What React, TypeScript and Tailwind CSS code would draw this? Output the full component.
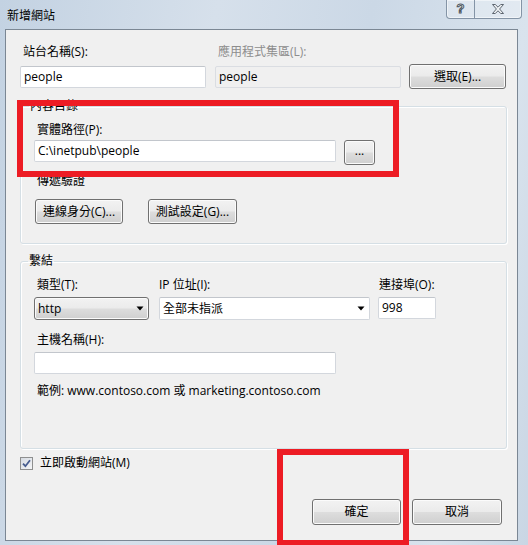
import type { ReactNode } from "react";

const btnFace =
  "rounded-[3px] border border-[#707070] bg-[linear-gradient(to_bottom,#f2f2f2_0%,#ebebeb_48%,#dddddd_52%,#cfcfcf_100%)] shadow-[inset_0_0_0_1px_#fbfbfb]";

function Button({ children, className }: { children: ReactNode; className: string }) {
  return (
    <div className={`flex items-center justify-center leading-[16px] ${btnFace} ${className}`}>
      {children}
    </div>
  );
}

function TextBox({
  value,
  className,
  disabled,
}: {
  value?: string;
  className: string;
  disabled?: boolean;
}) {
  return (
    <div
      className={`flex items-center rounded-[2px] border pl-[3px] leading-[16px] ${
        disabled
          ? "border-[#dadde2] bg-[#f0f0f0]"
          : "border-[#d3d7dd] border-t-[#c2c6cc] bg-white"
      } ${className}`}
    >
      {value}
    </div>
  );
}

function Arrow() {
  return (
    <svg width="8" height="5" viewBox="0 0 8 5" className="shrink-0">
      <path d="M0.5 0.5 H7.5 L4 4.5 Z" fill="#000" />
    </svg>
  );
}

export default function App() {
  return (
    <div className="relative h-[545px] w-[528px] overflow-hidden bg-[linear-gradient(100deg,#c3d2e2_0%,#d6e0eb_35%,#cbd8e6_60%,#d9e3ed_85%,#c9d6e4_100%)] font-['Open_Sans','Noto_Sans_CJK_TC',sans-serif] text-[12px] text-black">
      {/* Title bar */}
      <div className="flex h-[29px] items-start justify-between">
        <div className="pl-[7px] pt-[7px] leading-[16px] font-['Noto_Sans_CJK_TC',sans-serif]">
          新增網站
        </div>
        <div className="mr-[6px] flex h-[19px] rounded-b-[4px] border border-t-0 border-[#8494a6] bg-white/25 shadow-[inset_0_0_0_1px_rgba(255,255,255,0.5)]">
          <div className="flex w-[28px] items-center justify-center border-r border-[#8494a6] pb-[1px] text-[13px] font-bold leading-none text-[#f3f5f7] [-webkit-text-stroke:1px_#4f5862] font-['Liberation_Sans',sans-serif]">
            ?
          </div>
          <div className="flex w-[46px] items-center justify-center">
            <svg width="12" height="10" viewBox="0 0 12 10">
              <polygon
                points="0.5,0.5 3.3,0.5 6,3.2 8.7,0.5 11.5,0.5 7.6,5 11.5,9.5 8.7,9.5 6,6.8 3.3,9.5 0.5,9.5 4.4,5"
                fill="#eef1f4"
                stroke="#4f5862"
                strokeWidth="0.9"
                strokeLinejoin="round"
              />
            </svg>
          </div>
        </div>
      </div>

      {/* Client area */}
      <div className="ml-[5px] h-[512px] w-[513px] border border-[#7b8794] bg-[#f0f0f0]">
        <div className="pl-[14px] pt-[14px]">
          {/* Site name / application pool */}
          <div className="flex leading-[16px]">
            <div className="w-[186px] pl-[3px]">站台名稱(S):</div>
            <div className="ml-[9px] w-[186px] pl-[3px] text-[#8d8d8d]">應用程式集區(L):</div>
          </div>
          <div className="mt-[4px] flex h-[25px] items-center">
            <TextBox value="people" className="h-[22px] w-[186px]" />
            <TextBox value="people" disabled className="ml-[9px] h-[22px] w-[186px]" />
            <Button className="ml-[8px] h-[25px] w-[97px]">選取(E)...</Button>
          </div>

          {/* Content directory */}
          <fieldset className="mt-[9px] w-[487px] rounded-[3px] border border-[#d5dfe5] shadow-[inset_1px_1px_0_#fff,1px_1px_0_#fff]">
            <legend className="ml-[8px] px-[1px] leading-[16px]">內容目錄</legend>
            <div className="pb-[19px] pl-[13px]">
              <div className="mt-[8px] pl-[3px] leading-[16px]">實體路徑(P):</div>
              <div className="mt-[2px] flex items-start">
                <TextBox value="C:\inetpub\people" className="h-[22px] w-[302px]" />
                <div
                  className={`ml-[8px] flex h-[25px] w-[31px] items-center justify-center pb-[3px] leading-[16px] ${btnFace} border-[#3c7fb1]`}
                >
                  ...
                </div>
              </div>
              <div className="mt-[8px] pl-[3px] leading-[16px]">傳遞驗證</div>
              <div className="mt-[10px] flex">
                <Button className="ml-[1px] h-[25px] w-[88px]">連線身分(C)...</Button>
                <Button className="ml-[25px] h-[25px] w-[89px]">測試設定(G)...</Button>
              </div>
            </div>
          </fieldset>

          {/* Bindings */}
          <fieldset className="mt-[9px] w-[487px] rounded-[3px] border border-[#d5dfe5] shadow-[inset_1px_1px_0_#fff,1px_1px_0_#fff]">
            <legend className="ml-[7px] px-[1px] leading-[16px]">繫結</legend>
            <div className="pb-[49px] pl-[13px]">
              <div className="mt-[8px] flex leading-[16px]">
                <div className="w-[115px] pl-[3px]">類型(T):</div>
                <div className="ml-[10px] w-[211px]">IP 位址(I):</div>
                <div className="ml-[8px] w-[58px] pl-[1px]">連接埠(O):</div>
              </div>
              <div className="mt-[4px] flex items-start">
                <div
                  className={`flex h-[23px] w-[115px] items-center justify-between pl-[3px] pr-[4px] leading-[16px] ${btnFace}`}
                >
                  <span>http</span>
                  <Arrow />
                </div>
                <div className="ml-[10px] flex h-[23px] w-[211px] items-center justify-between rounded-[2px] border border-[#d3d7dd] border-t-[#c2c6cc] bg-white pl-[3px] pr-[4px] leading-[16px]">
                  <span>全部未指派</span>
                  <Arrow />
                </div>
                <TextBox value="998" className="ml-[8px] h-[22px] w-[58px]" />
              </div>
              <div className="mt-[12px] pl-[3px] leading-[16px]">主機名稱(H):</div>
              <TextBox className="mt-[4px] h-[22px] w-[302px]" />
              <div className="mt-[9px] pl-[3px] leading-[16px]">
                範例: www.contoso.com 或 marketing.contoso.com
              </div>
            </div>
          </fieldset>

          {/* Start website */}
          <div className="mt-[6px] flex h-[16px] items-center">
            <div className="flex h-[13px] w-[13px] items-center justify-center border border-[#8e8f8f] bg-[linear-gradient(135deg,#d6dbe2,#f4f5f7)]">
              <svg width="9" height="9" viewBox="0 0 9 9">
                <path d="M1 4.6 L3.4 7.2 L8 1.2" fill="none" stroke="#465c8f" strokeWidth="1.8" />
              </svg>
            </div>
            <div className="ml-[7px] leading-[16px]">立即啟動網站(M)</div>
          </div>

          {/* OK / Cancel */}
          <div className="mt-[28px] flex w-[482px] justify-end gap-[11px]">
            <Button className="h-[26px] w-[89px]">確定</Button>
            <Button className="h-[26px] w-[90px]">取消</Button>
          </div>
        </div>
      </div>

      {/* Red highlight boxes */}
      <div className="absolute left-[17px] top-[100px] h-[77px] w-[382px] border-[6px] border-[#ed1c24]" />
      <div className="absolute left-[277px] top-[449px] h-[97px] w-[132px] border-[6px] border-[#ed1c24]" />
    </div>
  );
}
